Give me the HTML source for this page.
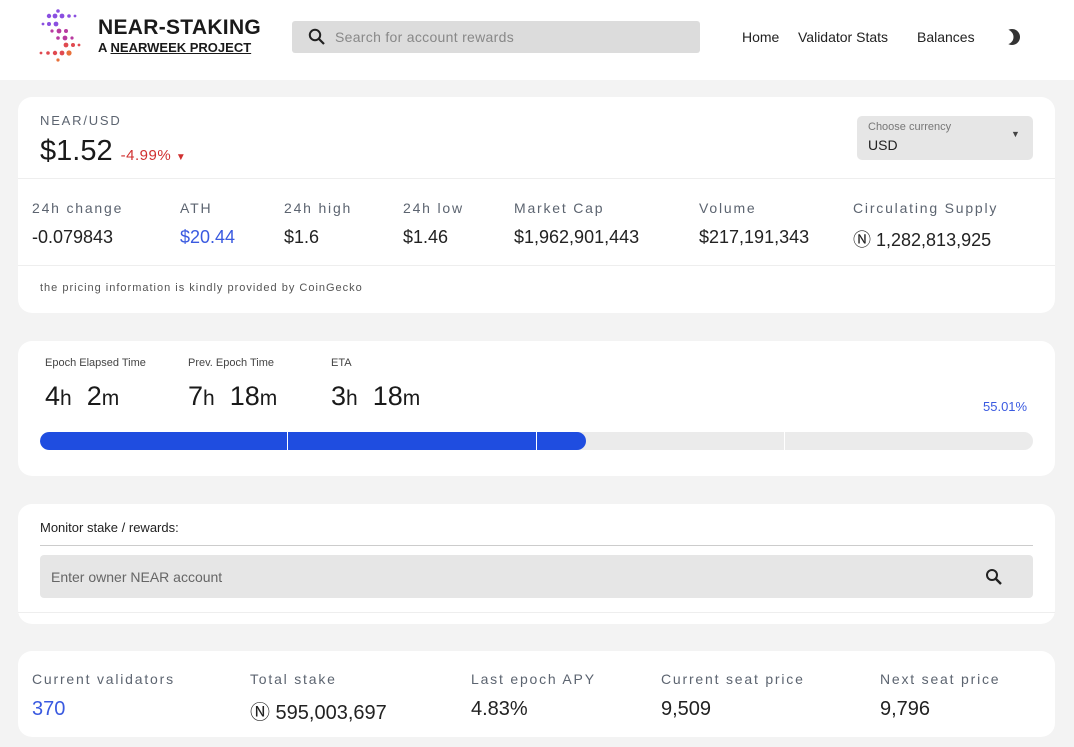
<!DOCTYPE html>
<html><head><meta charset="utf-8"><style>
*{box-sizing:border-box;margin:0;padding:0}
body{width:1074px;height:747px;overflow:hidden;background:#f3f3f3;font-family:"Liberation Sans",sans-serif;color:#222}
.hdr{position:absolute;left:0;top:0;width:1074px;height:80px;background:#fff}
.card{position:absolute;left:18px;width:1037px;background:#fff;border-radius:14px}
.abs{position:absolute}
.lbl{font-size:14px;color:#5c6470;letter-spacing:1.8px}
.val{font-size:18px;color:#222}
</style></head><body>
<div class="hdr">
<svg class="abs" style="left:38px;top:8px" width="46" height="54" viewBox="0 0 46 54">
<g fill="#8a4fe0"><circle cx="20" cy="3" r="1.8"/><circle cx="11" cy="8" r="2.2"/><circle cx="17" cy="8" r="2.4"/><circle cx="24" cy="8" r="2.4"/><circle cx="31" cy="8" r="1.8"/><circle cx="37" cy="8" r="1.4"/><circle cx="5" cy="16" r="1.4"/><circle cx="11" cy="16" r="2"/><circle cx="18" cy="16" r="2.4"/></g>
<g fill="#b83aa0"><circle cx="14" cy="23" r="1.6"/><circle cx="21" cy="23" r="2.4"/><circle cx="28" cy="23" r="2"/><circle cx="20" cy="30" r="1.8"/><circle cx="27" cy="30" r="2.4"/><circle cx="34" cy="30" r="1.6"/></g>
<g fill="#e04a50"><circle cx="28" cy="37" r="2.4"/><circle cx="35" cy="37" r="2"/><circle cx="41" cy="37" r="1.4"/><circle cx="3" cy="45" r="1.4"/><circle cx="10" cy="45" r="1.8"/><circle cx="17" cy="45" r="2.2"/><circle cx="24" cy="45" r="2.4"/><circle cx="31" cy="45" r="2.6" fill="#e8703a"/><circle cx="20" cy="52" r="1.6" fill="#e8703a"/></g>
</svg>
<div class="abs" style="left:98px;top:16px;font-size:21px;font-weight:bold;color:#1a1a1a;letter-spacing:0.3px">NEAR-STAKING</div>
<div class="abs" style="left:98px;top:40px;font-size:13px;font-weight:bold;color:#1a1a1a">A <span style="text-decoration:underline">NEARWEEK PROJECT</span></div>
<div class="abs" style="left:292px;top:21px;width:408px;height:32px;background:#dcdcdc;border-radius:3px">
<svg class="abs" style="left:16px;top:7px" width="18" height="18" viewBox="0 0 18 18"><circle cx="7" cy="7" r="5.2" stroke="#222" stroke-width="2" fill="none"/><path d="M11 11l5 5" stroke="#222" stroke-width="2.2"/></svg>
<div class="abs" style="left:43px;top:8px;font-size:14px;color:#888;letter-spacing:0.3px">Search for account rewards</div></div>
<div class="abs" style="left:742px;top:29px;font-size:14px;color:#222">Home</div>
<div class="abs" style="left:798px;top:29px;font-size:14px;color:#222">Validator Stats</div>
<div class="abs" style="left:917px;top:29px;font-size:14px;color:#222">Balances</div>
<svg class="abs" style="left:1002px;top:28px" width="18" height="18" viewBox="0 0 18 18"><circle cx="10" cy="9" r="8" fill="#333"/><circle cx="4" cy="9" r="7.5" fill="#fff"/></svg>
</div>

<div class="card" style="top:97px;height:216px">
<div class="abs lbl" style="left:22px;top:16px;font-size:13px">NEAR/USD</div>
<div class="abs" style="left:22px;top:38px;font-size:29px;color:#1a1a1a">$1.52 <span style="font-size:15px;color:#d03030;letter-spacing:0.5px">-4.99% <span style="font-size:10px">▼</span></span></div>
<div class="abs" style="left:839px;top:19px;width:176px;height:44px;background:#e6e6e6;border-radius:5px">
<div class="abs" style="left:11px;top:5px;font-size:11px;color:#777">Choose currency</div>
<div class="abs" style="left:11px;top:21px;font-size:14px;color:#222">USD</div>
<div class="abs" style="left:154px;top:13px;font-size:9px;color:#444">▼</div></div>
<div class="abs" style="left:0;top:81px;width:1037px;border-top:1px solid #eee"></div>
<div class="abs lbl" style="left:14px;top:103px">24h change</div><div class="abs val" style="left:14px;top:130px">-0.079843</div>
<div class="abs lbl" style="left:162px;top:103px">ATH</div><div class="abs val" style="left:162px;top:130px;color:#3a5ae0">$20.44</div>
<div class="abs lbl" style="left:266px;top:103px">24h high</div><div class="abs val" style="left:266px;top:130px">$1.6</div>
<div class="abs lbl" style="left:385px;top:103px">24h low</div><div class="abs val" style="left:385px;top:130px">$1.46</div>
<div class="abs lbl" style="left:496px;top:103px">Market Cap</div><div class="abs val" style="left:496px;top:130px">$1,962,901,443</div>
<div class="abs lbl" style="left:681px;top:103px">Volume</div><div class="abs val" style="left:681px;top:130px">$217,191,343</div>
<div class="abs lbl" style="left:835px;top:103px">Circulating Supply</div><div class="abs val" style="left:835px;top:129px">Ⓝ 1,282,813,925</div>
<div class="abs" style="left:0;top:168px;width:1037px;border-top:1px solid #eee"></div>
<div class="abs" style="left:22px;top:185px;font-size:11px;color:#555;letter-spacing:1px">the pricing information is kindly provided by CoinGecko</div>
</div>

<div class="card" style="top:341px;height:135px">
<div class="abs" style="left:27px;top:16px;font-size:11px;color:#444">Epoch Elapsed Time</div>
<div class="abs" style="left:170px;top:16px;font-size:11px;color:#444">Prev. Epoch Time</div>
<div class="abs" style="left:313px;top:16px;font-size:11px;color:#444">ETA</div>
<div class="abs" style="left:27px;top:40px;font-size:27px;color:#1a1a1a">4<span style="font-size:21px">h</span> &nbsp;2<span style="font-size:21px">m</span></div>
<div class="abs" style="left:170px;top:40px;font-size:27px;color:#1a1a1a">7<span style="font-size:21px">h</span> &nbsp;18<span style="font-size:21px">m</span></div>
<div class="abs" style="left:313px;top:40px;font-size:27px;color:#1a1a1a">3<span style="font-size:21px">h</span> &nbsp;18<span style="font-size:21px">m</span></div>
<div class="abs" style="left:965px;top:58px;font-size:13px;color:#3a5ae0">55.01%</div>
<div class="abs" style="left:22px;top:91px;width:993px;height:18px;background:#ebebeb;border-radius:9px;overflow:hidden">
<div class="abs" style="left:0;top:0;width:546px;height:18px;background:#1f4de0;border-radius:9px"></div>
<div class="abs" style="left:247px;top:0;width:1px;height:18px;background:#fff"></div>
<div class="abs" style="left:496px;top:0;width:1px;height:18px;background:#fff"></div>
<div class="abs" style="left:744px;top:0;width:1px;height:18px;background:#fff"></div></div>
</div>

<div class="card" style="top:504px;height:120px">
<div class="abs" style="left:22px;top:16px;font-size:13px;color:#222">Monitor stake / rewards:</div>
<div class="abs" style="left:22px;top:41px;width:993px;border-top:1px solid #ccc"></div>
<div class="abs" style="left:22px;top:51px;width:993px;height:43px;background:#e6e6e6;border-radius:4px">
<div class="abs" style="left:11px;top:14px;font-size:14px;color:#666">Enter owner NEAR account</div>
<svg class="abs" style="left:945px;top:13px" width="18" height="18" viewBox="0 0 18 18"><circle cx="7" cy="7" r="5" stroke="#222" stroke-width="2" fill="none"/><path d="M10.5 10.5l5.5 5.5" stroke="#222" stroke-width="2.4"/></svg></div>
<div class="abs" style="left:0;top:108px;width:1037px;border-top:1px solid #eee"></div>
</div>

<div class="card" style="top:651px;height:86px">
<div class="abs lbl" style="left:14px;top:20px">Current validators</div><div class="abs" style="left:14px;top:47px;font-size:20px;color:#3a5ae0">370</div>
<div class="abs lbl" style="left:232px;top:20px">Total stake</div><div class="abs" style="left:232px;top:45px;font-size:20px">Ⓝ 595,003,697</div>
<div class="abs lbl" style="left:453px;top:20px">Last epoch APY</div><div class="abs" style="left:453px;top:47px;font-size:20px">4.83%</div>
<div class="abs lbl" style="left:643px;top:20px">Current seat price</div><div class="abs" style="left:643px;top:47px;font-size:20px">9,509</div>
<div class="abs lbl" style="left:862px;top:20px">Next seat price</div><div class="abs" style="left:862px;top:47px;font-size:20px">9,796</div>
</div>
</body></html>
